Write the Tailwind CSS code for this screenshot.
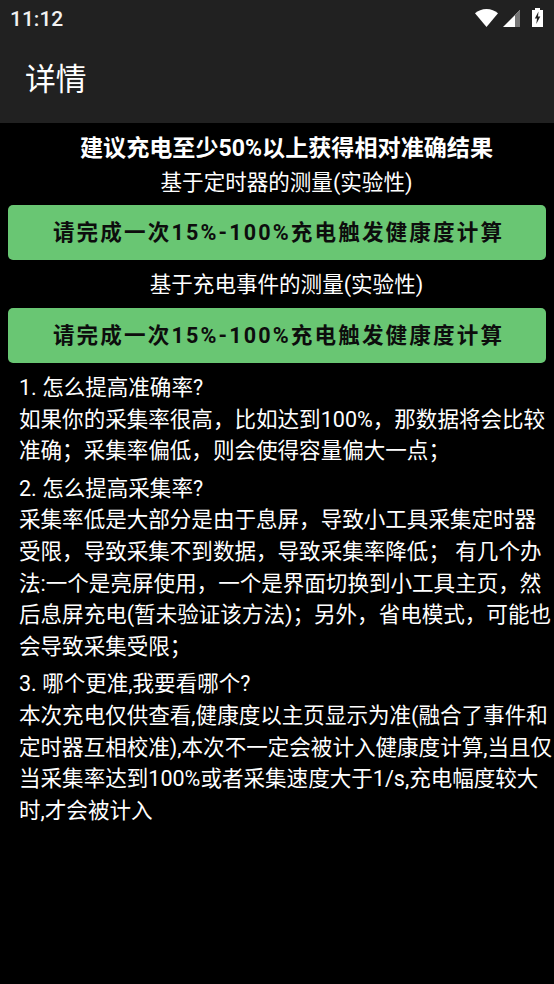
<!DOCTYPE html>
<html lang="zh-CN">
<head>
<meta charset="utf-8">
<script src="https://cdn.jsdelivr.net/npm/@tailwindcss/browser@4"></script>
</head>
<body class="bg-black">
<div class="w-[554px] h-[984px] bg-black text-white overflow-hidden font-['Roboto','Noto_Sans_CJK_SC',sans-serif]">
  <header class="bg-[#212121] h-[123px]">
    <div class="h-[36px] flex items-center justify-between pl-[10px] pr-[11px]">
      <span class="text-[21px] leading-none text-[#f2f2f2] font-medium mt-[2px]">11:12</span>
      <div class="flex items-center">
        <svg class="w-[23px] h-[18px]" viewBox="0 0 23 18"><path d="M0 4.300C3 1.800 7 0 11.500 0S20 1.800 23 4.300L11.500 18z" fill="#fff"/></svg>
        <svg class="w-[17px] h-[17px] ml-[5px] mt-[1px]" viewBox="0 0 17 17"><path d="M0 17L17 0v17z" fill="#fff"/><path d="M12 5l5-5v17h-5z" fill="#777"/></svg>
        <svg class="w-[11px] h-[19px] ml-[12px] -mt-[1px]" viewBox="0 0 11 19"><path d="M3 2V0h5v2h3v17H0V2z" fill="#fff"/><path d="M6.500 3.500L2.800 10.500H5L4.300 16 8.300 8.500H6z" fill="#212121"/></svg>
      </div>
    </div>
    <h1 class="pl-[25px] pt-[8px] text-[30.800px] leading-[72px] font-normal">详情</h1>
  </header>
  <main class="pt-[10px] pl-[8px]">
    <p class="text-center pl-[11px] text-[23.100px] leading-[32px] font-bold">建议充电至少50%以上获得相对准确结果</p>
    <p class="text-center pl-[11px] text-[21.560px] leading-[32px] mt-[2px]">基于定时器的测量(实验性)</p>
    <div class="mt-[6px] w-[538px] h-[55px] pt-[2px] pl-[3px] rounded-[5px] bg-[#69c673] flex items-center justify-center text-[21.560px] font-bold text-[#0d0d0d] tracking-[0.1em]">请完成一次15%-100%充电触发健康度计算</div>
    <p class="mt-[10px] pl-[11px] text-center text-[21.560px] leading-[30px]">基于充电事件的测量(实验性)</p>
    <div class="mt-[8px] w-[538px] h-[55px] pt-[2px] pl-[3px] rounded-[5px] bg-[#69c673] flex items-center justify-center text-[21.560px] font-bold text-[#0d0d0d] tracking-[0.1em]">请完成一次15%-100%充电触发健康度计算</div>
    <div class="mt-[9px] ml-[11px] w-[535px] text-[21.560px] leading-[31.700px] flex flex-col gap-[5.500px]">
      <p>1. 怎么提高准确率?<br>如果你的采集率很高，比如达到100%，那数据将会比较准确；采集率偏低，则会使得容量偏大一点；</p>
      <p>2. 怎么提高采集率?<br>采集率低是大部分是由于息屏，导致小工具采集定时器受限，导致采集不到数据，导致采集率降低； 有几个办法:一个是亮屏使用，一个是界面切换到小工具主页，然后息屏充电(暂未验证该方法)；另外，省电模式，可能也会导致采集受限；</p>
      <p>3. 哪个更准,我要看哪个?<br>本次充电仅供查看,健康度以主页显示为准(融合了事件和定时器互相校准),本次不一定会被计入健康度计算,当且仅当采集率达到100%或者采集速度大于1/s,充电幅度较大时,才会被计入</p>
    </div>
  </main>
</div>
</body>
</html>
